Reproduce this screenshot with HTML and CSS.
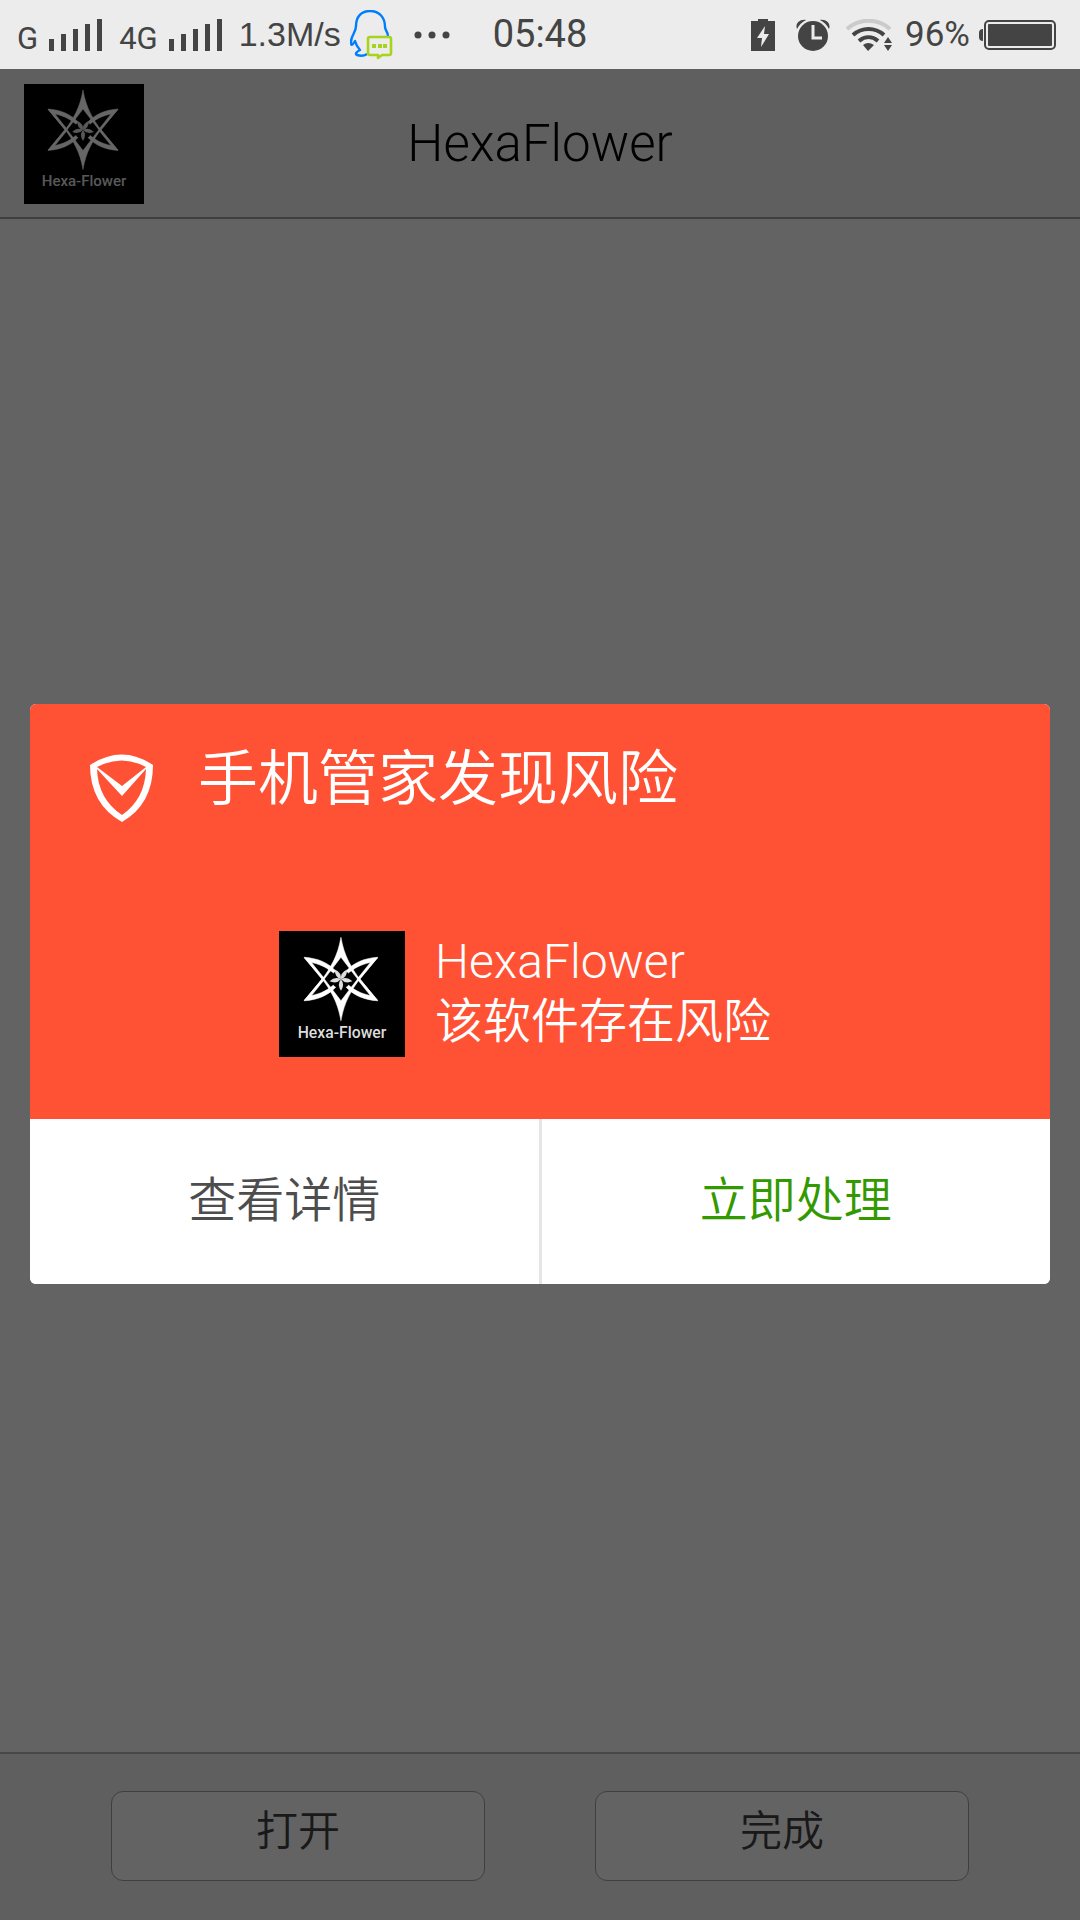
FILE: index.html
```html
<!DOCTYPE html>
<html lang="zh-CN">

<head>
  <meta charset="UTF-8">
  <meta name="viewport" content="width=device-width, initial-scale=1.0">
  <title>HexaFlower</title>
  <link rel="stylesheet" href="styles.css">
</head>

<body>
  <div class="status">
    <div class="status-left">
      <span class="net">G</span>
      <svg class="signal" width="54" height="32" viewBox="0 0 54 32">
        <path d="M0 20h5v12H0zM12 15h5v17h-5zM24 10h5v22h-5zM36 5h5v27h-5zM48 0h5v32h-5z" />
      </svg>
      <span class="net">4G</span>
      <svg class="signal" width="54" height="32" viewBox="0 0 54 32">
        <path d="M0 20h5v12H0zM12 15h5v17h-5zM24 10h5v22h-5zM36 5h5v27h-5zM48 0h5v32h-5z" />
      </svg>
      <span class="speed">1.3M/s</span>
      <svg class="qq" width="43" height="50" viewBox="0 0 43 50">
        <path d="M38 26C38 22 35 20 35 17C35 7 29 1 20 1S6 7 6 16C6 23 1 25 1 32C1 36 2 36 5 31C6 35 7 37 10 40C6 42 5 44 7 45C10 46 14 46 17 44" fill="none" stroke="#007dff" stroke-width="2.4" stroke-linejoin="round" />
        <path d="M20 27h19q2 0 2 2v14q0 2-2 2h-7l-4 3v-3h-8q-2 0-2-2V29q0-2 2-2z" fill="#ececec" stroke="#a8d31c" stroke-width="2.6" stroke-linejoin="round" />
        <path d="M22 34h4v4h-4zM28 34h4v4h-4zM33 34h4v4h-4z" fill="#a8d31c" />
      </svg>
      <svg class="more" width="36" height="8" viewBox="0 0 36 8">
        <circle cx="4" cy="4" r="3.5" />
        <circle cx="18" cy="4" r="3.5" />
        <circle cx="32" cy="4" r="3.5" />
      </svg>
    </div>
    <div class="time">05:48</div>
    <div class="status-right">
      <svg class="charge" width="24" height="32" viewBox="0 0 24 32">
        <path d="M7 0h10v2h7v30H0V2h7z" />
        <path d="M14 7L6 19h5l-1 9l8-13h-5z" fill="#ececec" />
      </svg>
      <svg class="alarm" width="34" height="32" viewBox="0 0 34 32">
        <path d="M1 10C-1 5 3 0 10 1C6 3 3 6 1 10zM33 10C35 5 31 0 24 1C28 3 31 6 33 10z" />
        <circle cx="17" cy="17" r="15" />
        <path d="M17 6v13h9" fill="none" stroke="#ececec" stroke-width="3" />
      </svg>
      <svg class="wifi" width="46" height="32" viewBox="0 0 46 32">
        <g fill="none" stroke-width="4">
          <path d="M1 10C13-1 32-1 44 10" stroke="#cbcbcb" />
          <path d="M7 16C16 8 29 8 38 16" stroke="#444" />
          <path d="M13 22C19 17 26 17 32 22" stroke="#444" />
        </g>
        <path d="M17 26Q22 22 28 26L22 32zM38 24l4-6l4 6zM38 26h8l-4 6z" />
      </svg>
      <span class="percent">96%</span>
      <svg class="battery" width="77" height="30" viewBox="0 0 77 30">
        <path d="M4 9Q0 9 0 13v4q0 4 4 4z" />
        <rect x="6" y="1" width="70" height="28" rx="4" fill="none" stroke="#444" stroke-width="2" />
        <rect x="9" y="4" width="64" height="22" rx="1" />
      </svg>
    </div>
  </div>

  <div class="page">
    <div class="header">
      <svg class="logo" viewBox="0 0 120 120">
        <defs>
          <g id="hexa">
            <rect width="120" height="120" fill="#000" />
            <g id="star" fill="#fff" stroke="#fff" stroke-width=".5">
              <path id="tip" d="M59 6C62 24 69 35 77 46L94 66L93 66L75 46L59 25L43 46L25 66L24 66L41 46C49 35 56 24 59 6z" />
              <use href="#tip" transform="matrix(1 0 0 -1 0 91.5)" />
              <g id="wing">
                <path id="blade" d="M24 25C37 26 47 30 55 39L53 41C46 35 40 32 31 30L43 45L41 46z" />
                <use href="#blade" transform="matrix(1 0 0 -1 0 91.5)" />
              </g>
              <use href="#wing" transform="matrix(-1 0 0 1 118 0)" />
            </g>
            <!-- 中心的花 -->
            <circle cx="59" cy="46" r="9" fill="#000" />
            <g fill="#ddd">
              <path id="petal" d="M59 46Q55 51 59 57Q63 51 59 46z" />
              <use href="#petal" transform="rotate(80 59 46)" />
              <use href="#petal" transform="rotate(-80 59 46)" />
              <use href="#petal" transform="rotate(148 59 46)" />
              <use href="#petal" transform="rotate(-148 59 46)" />
            </g>
            <text class="logo-text" x="60" y="102" text-anchor="middle">Hexa-Flower</text>
          </g>
        </defs>
        <use href="#hexa" />
      </svg>
      <h1>HexaFlower</h1>
    </div>
    <div class="content"></div>
    <div class="footer">
      <button type="button">打开</button>
      <button type="button">完成</button>
    </div>

    <div class="mask">
      <div class="dialog" role="dialog" aria-labelledby="dialog-title">
        <div class="dialog-top">
          <div class="dialog-title">
            <svg class="shield" width="64" height="68" viewBox="0 0 64 68">
              <path d="M0 11Q32-10 63 11Q63 50 32 68Q0 50 0 11zM7 15Q8 45 32 61Q55 45 56 15L32 42zM7 13L32 32L56 13Q32 0 7 13z" fill="#fff" fill-rule="evenodd" />
            </svg>
            <h2 id="dialog-title">手机管家发现风险</h2>
          </div>
          <div class="app">
            <svg class="app-logo" viewBox="0 0 120 120">
              <use href="#hexa" />
            </svg>
            <div class="app-info">
              <p class="app-name">HexaFlower</p>
              <p>该软件存在风险</p>
            </div>
          </div>
        </div>
        <div class="dialog-btns">
          <button type="button">查看详情</button>
          <button type="button" class="handle">立即处理</button>
        </div>
      </div>
    </div>
  </div>
</body>

</html>
```

FILE: styles.css
```css
html,
body {
  height: 100%;
  margin: 0;
  padding: 0;
}

body {
  display: flex;
  flex-direction: column;
  font-family: Roboto, "Noto Sans CJK SC", sans-serif;
  font-weight: 350;
}

h1,
h2,
p {
  margin: 0;
  font-weight: 350;
}

button {
  padding: 0;
  border: 0;
  font-family: inherit;
  font-weight: 350;
}

svg {
  display: block;
  flex: none;
}

/* 状态栏 */
.status {
  display: grid;
  grid-template-columns: 1fr auto 1fr;
  align-items: center;
  height: 69px;
  flex: none;
  background: #ececec;
  color: #444;
  fill: #444;
  font-weight: 400;
}

.status-left,
.status-right {
  display: flex;
  align-items: center;
}

.status-left {
  padding-left: 17px;
}

.status-right {
  justify-content: flex-end;
  padding-right: 24px;
}

.net {
  padding-top: 8px;
  font-size: 31px;
}

.signal {
  margin: 0 16px 0 11px;
}

.speed {
  font-family: "Liberation Sans", sans-serif;
  font-size: 34px;
}

.qq {
  margin: 0 21px 0 9px;
}

.time {
  padding-bottom: 2px;
  font-size: 38px;
}

.alarm {
  margin: 0 16px 0 21px;
}

.wifi {
  margin-right: 13px;
}

.percent {
  font-size: 35px;
}

.battery {
  margin-left: 9px;
}

/* 安装页面 */
.page {
  position: relative;
  display: flex;
  flex-direction: column;
  flex: 1;
  background: #f8f8f8;
}

.header {
  display: grid;
  grid-template-columns: 1fr auto 1fr;
  align-items: center;
  height: 146px;
  padding: 2px 24px 0;
  border-bottom: 2px solid #9e9e9e;
  background: #eee;
}

.header h1 {
  padding-bottom: 2px;
  color: #000;
  font-size: 51px;
  font-weight: 300;
}

.logo {
  width: 120px;
  height: 120px;
}

.logo-text {
  fill: #ddd;
  font-size: 15px;
  font-weight: 500;
}

.content {
  flex: 1;
}

.footer {
  display: flex;
  gap: 110px;
  padding: 37px 111px 39px;
  border-top: 2px solid #b4b4b4;
  background: #eee;
}

.footer button {
  flex: 1;
  box-sizing: border-box;
  height: 90px;
  padding-bottom: 18px;
  border: 1px solid #9e9e9e;
  border-radius: 12px;
  background: #f8f8f8;
  color: #404040;
  font-size: 42px;
}

/* 风险弹窗 */
.mask {
  position: absolute;
  top: 0;
  right: 0;
  bottom: 0;
  left: 0;
  display: flex;
  align-items: center;
  padding: 0 30px 2px;
  background: rgba(0, 0, 0, .6);
}

.dialog {
  flex: 1;
  overflow: hidden;
  border-radius: 6px;
  background: #fff;
}

.dialog-top {
  padding: 32px 60px 62px;
  background: #ff5235;
  color: #fff;
}

.dialog-title {
  display: flex;
  align-items: center;
  gap: 44px;
}

.dialog-title h2 {
  font-size: 60px;
  line-height: 88px;
}

.shield {
  margin-top: 16px;
}

.app {
  display: flex;
  align-items: center;
  gap: 30px;
  margin-top: 107px;
  padding-left: 189px;
}

.app-logo {
  width: 126px;
  height: 126px;
}

.app-info {
  padding-bottom: 4px;
  font-size: 48px;
  line-height: 60px;
}

.app-name {
  font-weight: 300;
}

.dialog-btns {
  display: flex;
}

.dialog-btns button {
  flex: 1;
  height: 165px;
  padding-bottom: 10px;
  background: #fff;
  color: #4d4d4d;
  font-size: 48px;
}

.dialog-btns .handle {
  border-left: 3px solid #e5e5e5;
  color: #390;
}
```
